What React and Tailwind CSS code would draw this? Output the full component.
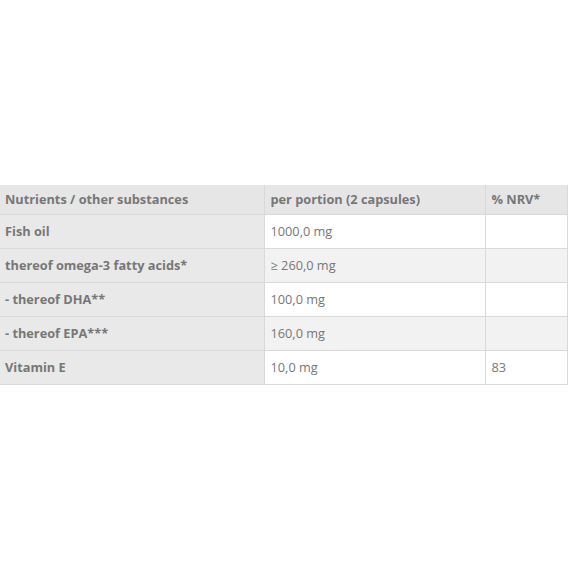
import React from 'react';

const rows = [
  { name: 'Fish oil', amount: '1000,0 mg', nrv: '' },
  { name: 'thereof omega-3 fatty acids*', amount: '≥ 260,0 mg', nrv: '' },
  { name: '- thereof DHA**', amount: '100,0 mg', nrv: '' },
  { name: '- thereof EPA***', amount: '160,0 mg', nrv: '' },
  { name: 'Vitamin E', amount: '10,0 mg', nrv: '83' },
];

const App = () => {
  return (
    <div className="min-h-screen bg-white flex items-center" style={{ fontFamily: '"Open Sans", sans-serif' }}>
      <table className="w-[568px] table-fixed border-collapse text-[12.75px] text-[#777777]">
        <colgroup>
          <col className="w-[264px]" />
          <col className="w-[221px]" />
          <col />
        </colgroup>
        <thead>
          <tr className="h-[30px] bg-[#e6e6e6] font-bold">
            <th className="border-r border-b border-[#d9d9d9] px-[5px] text-left">Nutrients / other substances</th>
            <th className="border border-t-0 border-[#d9d9d9] px-[6px] text-left">per portion (2 capsules)</th>
            <th className="border border-t-0 border-[#d9d9d9] px-[6px] text-left">% NRV*</th>
          </tr>
        </thead>
        <tbody>
          {rows.map((row, i) => (
            <tr key={row.name} className={i % 2 === 0 ? 'h-[34px] bg-white' : 'h-[34px] bg-[#f2f2f2]'}>
              <td className="border-r border-b border-[#d9d9d9] bg-[#e9e9e9] px-[5px] font-bold">{row.name}</td>
              <td className="border border-[#d9d9d9] px-[6px]">{row.amount}</td>
              <td className="border border-[#d9d9d9] px-[6px]">{row.nrv}</td>
            </tr>
          ))}
        </tbody>
      </table>
    </div>
  );
};

export default App;
